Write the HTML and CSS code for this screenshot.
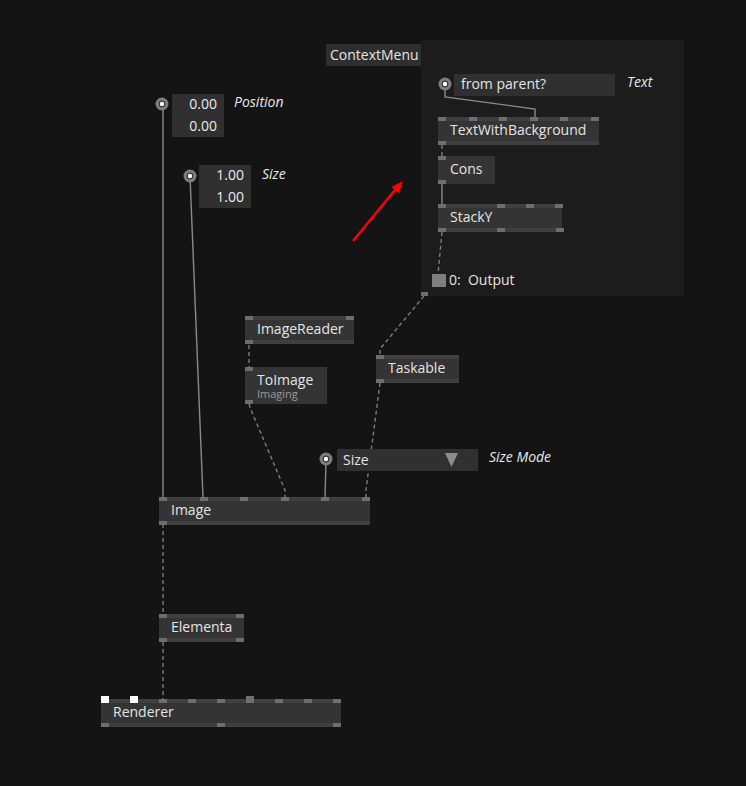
FILE: index.html
```html
<!DOCTYPE html>
<html>
<head>
<meta charset="utf-8">
<link rel="stylesheet" href="styles.css">
</head>
<body>
<div class="canvas">
  <div class="region" style="left:421px;top:40px;width:263px;height:256px"></div>

  <svg class="wires" width="746" height="786" viewBox="0 0 746 786">
    <g class="wire">
      <polyline points="163,104 163,497"/>
      <polyline points="190,176 203,497"/>
      <polyline points="445,84 445,97 535,109 535,117"/>
      <polyline points="442,184 442,204"/>
      <polyline points="326,462 325,497"/>
    </g>
    <g class="wire dashed">
      <polyline points="442,145 442,156"/>
      <polyline points="442,232 438,274"/>
      <polyline points="424,296 380,349 380,355"/>
      <polyline points="249,345 249,367"/>
      <polyline points="249,404 251,410 285,490 285,497"/>
      <polyline points="380,383 366,490 366,497"/>
      <polyline points="163,524 163,614"/>
      <polyline points="163,642 163,699"/>
    </g>
    <g class="iopin">
      <circle cx="162" cy="104" r="6.5" class="ring"/><circle cx="162" cy="104" r="3.4" class="hole"/><circle cx="162" cy="104" r="2.2" class="dot"/>
      <circle cx="190" cy="176" r="6.5" class="ring"/><circle cx="190" cy="176" r="3.4" class="hole"/><circle cx="190" cy="176" r="2.2" class="dot"/>
      <circle cx="445" cy="84" r="6.5" class="ring"/><circle cx="445" cy="84" r="3.4" class="hole"/><circle cx="445" cy="84" r="2.2" class="dot"/>
      <circle cx="326" cy="459" r="6.5" class="ring"/><circle cx="326" cy="459" r="3.4" class="hole"/><circle cx="326" cy="459" r="2.2" class="dot"/>
    </g>
    <g class="arrow">
      <line x1="353" y1="241" x2="395" y2="190"/>
      <polygon points="403,181 399.1,193.4 391.5,187"/>
    </g>
  </svg>

  <!-- ContextMenu -->
  <div class="plain" style="left:326px;top:44px;width:95px">ContextMenu</div>

  <!-- IOBoxes -->
  <div class="iobox" style="left:454px;top:74px;width:161px">from parent?</div>
  <div class="label" style="left:627px;top:73px">Text</div>

  <div class="vbox" style="left:172px;top:94px;width:52px"><span>0.00</span><span>0.00</span></div>
  <div class="label" style="left:234px;top:93px">Position</div>

  <div class="vbox" style="left:199px;top:165px;width:52px"><span>1.00</span><span>1.00</span></div>
  <div class="label" style="left:262px;top:165px">Size</div>

  <div class="iobox enum" style="left:337px;top:449px;width:141px"><span>Size</span>
    <svg width="13" height="14" viewBox="0 0 13 14"><polygon points="0,0 13,0 6.5,14" fill="#8c8c8c"/></svg>
  </div>
  <div class="label" style="left:489px;top:448px">Size Mode</div>

  <!-- Nodes -->
  <div class="node" style="left:438px;top:117px;width:161px">
    <div class="strip spread"><i></i><i></i><i></i><i></i><i></i><i></i></div>
    <div class="name">TextWithBackground</div>
    <div class="strip"><i></i></div>
  </div>

  <div class="node bare" style="left:438px;top:156px;width:57px">
    <div class="strip"><i></i></div>
    <div class="name">Cons</div>
    <div class="strip"><i></i></div>
  </div>

  <div class="node" style="left:438px;top:204px;width:124px">
    <div class="strip"><i></i><i style="margin-left:51px"></i><i style="margin-left:21px"></i><i style="margin-left:21px"></i></div>
    <div class="name">StackY</div>
    <div class="strip"><i></i><i style="margin-left:51px"></i><i style="margin-left:51px"></i></div>
  </div>

  <div class="output" style="left:432px;top:274px"><b></b><span>0:&nbsp; Output</span></div>
  <div class="rpin" style="left:421px;top:292px"></div>

  <div class="node" style="left:245px;top:316px;width:109px">
    <div class="strip spread"><i></i><i></i></div>
    <div class="name">ImageReader</div>
    <div class="strip"><i></i></div>
  </div>

  <div class="node bare tall" style="left:245px;top:367px;width:82px">
    <div class="strip"><i></i></div>
    <div class="name"><span>ToImage</span><small>Imaging</small></div>
    <div class="strip"><i></i></div>
  </div>

  <div class="node" style="left:376px;top:355px;width:83px">
    <div class="strip"><i></i></div>
    <div class="name">Taskable</div>
    <div class="strip"><i></i></div>
  </div>

  <div class="node" style="left:159px;top:497px;width:211px">
    <div class="strip spread"><i></i><i></i><i></i><i></i><i></i><i></i></div>
    <div class="name">Image</div>
    <div class="strip"><i></i></div>
  </div>

  <div class="node" style="left:159px;top:614px;width:85px">
    <div class="strip spread"><i></i><i></i></div>
    <div class="name">Elementa</div>
    <div class="strip spread"><i></i><i></i></div>
  </div>

  <div class="node" style="left:101px;top:699px;width:240px">
    <div class="strip spread"><i class="white"></i><i class="white"></i><i></i><i></i><i></i><i class="big"></i><i></i><i></i><i></i></div>
    <div class="name">Renderer</div>
    <div class="strip spread"><i></i><i></i><i></i></div>
  </div>
</div>
</body>
</html>
```
FILE: styles.css
```css
html, body {
  margin: 0;
  padding: 0;
  background: #141414;
}
.canvas {
  position: relative;
  width: 746px;
  height: 786px;
  overflow: hidden;
  font-family: "Open Sans", "Noto Sans", "DejaVu Sans", sans-serif;
  font-size: 14px;
  color: #e4e4e4;
}
.region {
  position: absolute;
  background: #1c1c1c;
}
.wires {
  position: absolute;
  left: 0;
  top: 0;
}
.wire polyline {
  fill: none;
  stroke: #8a8a8a;
  stroke-width: 1.4;
}
.wire.dashed polyline {
  stroke-dasharray: 4 3;
  stroke: #7c7c7c;
}
.iopin .ring { fill: #7e7e7e; }
.iopin .hole { fill: #3a3a3a; }
.iopin .dot { fill: #ffffff; }
.arrow line {
  stroke: #ff0000;
  stroke-width: 2.5;
}
.arrow polygon { fill: #ff0000; }

.plain, .iobox, .vbox, .label, .node, .output, .rpin {
  position: absolute;
}
.plain {
  height: 22px;
  line-height: 21px;
  background: #2e2e2e;
  padding-left: 4px;
  box-sizing: border-box;
  white-space: nowrap;
}
.iobox {
  height: 22px;
  line-height: 20px;
  background: #303030;
  padding: 0 7px;
  box-sizing: border-box;
  white-space: nowrap;
}
.iobox.enum {
  display: flex;
  align-items: center;
  justify-content: space-between;
  padding: 0 20px 0 6px;
}
.iobox.enum svg { display: block; }
.vbox {
  background: #303030;
  display: flex;
  flex-direction: column;
  align-items: flex-end;
  padding: 0 7px 0 0;
  height: 43px;
  box-sizing: border-box;
  color: #e6eef6;
}
.vbox span {
  height: 21.5px;
  line-height: 20px;
}
.label {
  font-style: italic;
  line-height: 18px;
  color: #e8e8e8;
  white-space: nowrap;
}
.node {
  display: flex;
  flex-direction: column;
  background: #343434;
  height: 28px;
}
.node .strip {
  height: 4px;
  background: #3f3f3f;
  display: flex;
  flex: none;
}
.node.bare .strip { background: transparent; }
.node .strip.spread { justify-content: space-between; }
.node .strip i {
  display: block;
  width: 8px;
  height: 4px;
  background: #6e6e6e;
  flex: none;
}
.node .strip i.white {
  background: #ffffff;
  height: 7px;
  margin-top: -3px;
}
.node .strip i.big {
  height: 7px;
  margin-top: -3px;
}
.node .name {
  flex: 1;
  padding-left: 12px;
  line-height: 18px;
  white-space: nowrap;
}
.node.tall { height: 37px; }
.node.tall .name {
  display: flex;
  flex-direction: column;
  padding-top: 0;
}
.node.tall .name span {
  line-height: 17px;
  height: 17px;
}
.node .name small {
  font-size: 11px;
  line-height: 11px;
  height: 11px;
  color: #9a9a9a;
}
.output {
  display: flex;
  align-items: center;
  gap: 3px;
  height: 13px;
  white-space: nowrap;
}
.output b {
  display: block;
  width: 14px;
  height: 13px;
  background: #7f7f7f;
}
.output span {
  line-height: 13px;
  margin-top: -3px;
}
.rpin {
  width: 7px;
  height: 4px;
  background: #6e6e6e;
}
```
